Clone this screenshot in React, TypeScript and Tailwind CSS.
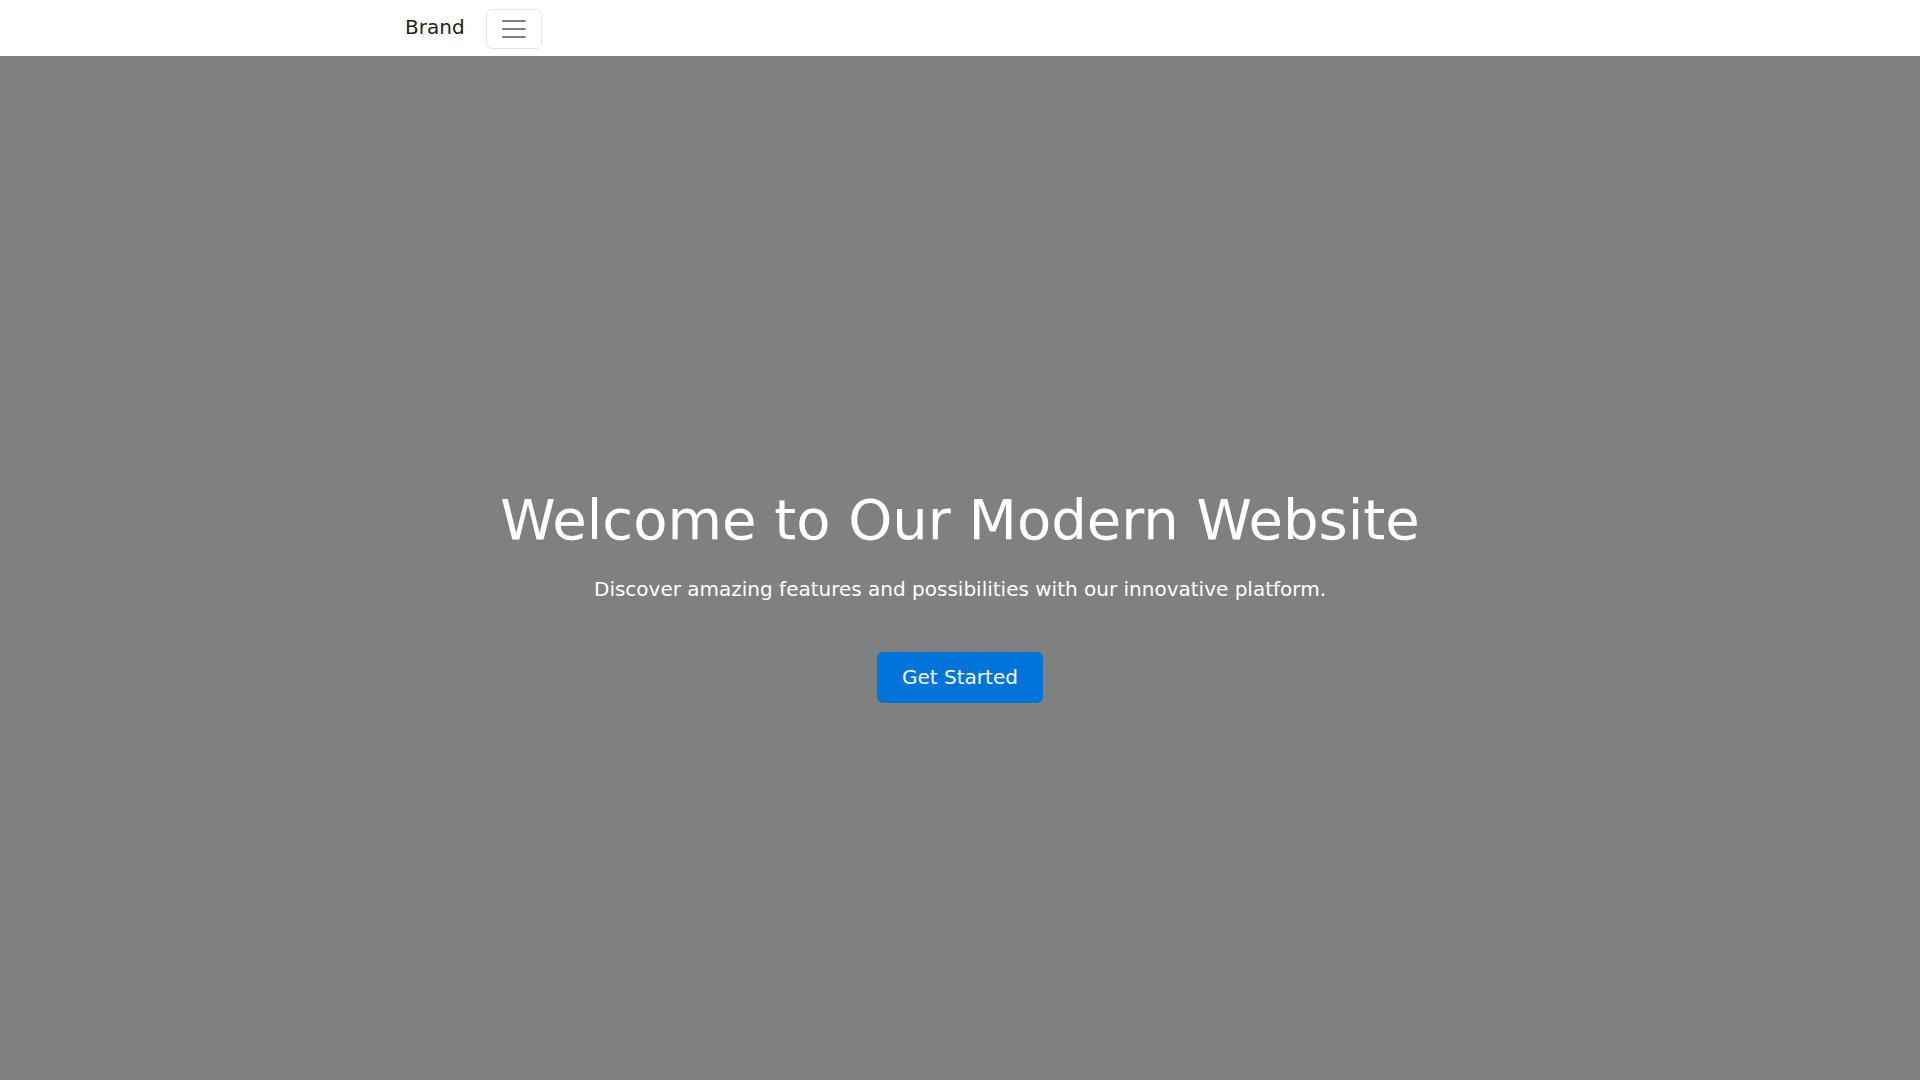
export default function App() {
  return (
    <div className="min-h-screen bg-white" style={{ fontFamily: '"DejaVu Sans", "Liberation Sans", sans-serif' }}>
      <nav className="h-14 bg-white">
        <div className="mx-auto flex h-full max-w-[1140px] items-center px-[15px]">
          <span className="mr-[21px] mb-[2px] text-xl leading-[30px] text-black/90">Brand</span>
          <button className="mt-[2px] flex h-10 w-14 items-center justify-center rounded-md border border-black/10">
            <svg width="30" height="30" viewBox="0 0 30 30">
              <path d="M4 7h22M4 15h22M4 23h22" stroke="rgba(0,0,0,0.5)" strokeWidth="2" strokeLinecap="round" strokeMiterlimit="10" />
            </svg>
          </button>
        </div>
      </nav>

      <section className="flex h-screen items-center justify-center bg-[#808080] pb-[3px] text-center text-white">
        <div className="flex flex-col items-center">
          <h1 className="mb-5 text-[56px] font-normal leading-[1.2]">Welcome to Our Modern Website</h1>
          <p className="mb-12 text-xl font-normal leading-[1.5]">
            Discover amazing features and possibilities with our innovative platform.
          </p>
          <button className="h-[51px] rounded-md border border-[#0074d9] bg-[#0074d9] px-6 text-xl leading-[1.5] text-white">
            Get Started
          </button>
        </div>
      </section>
    </div>
  )
}
